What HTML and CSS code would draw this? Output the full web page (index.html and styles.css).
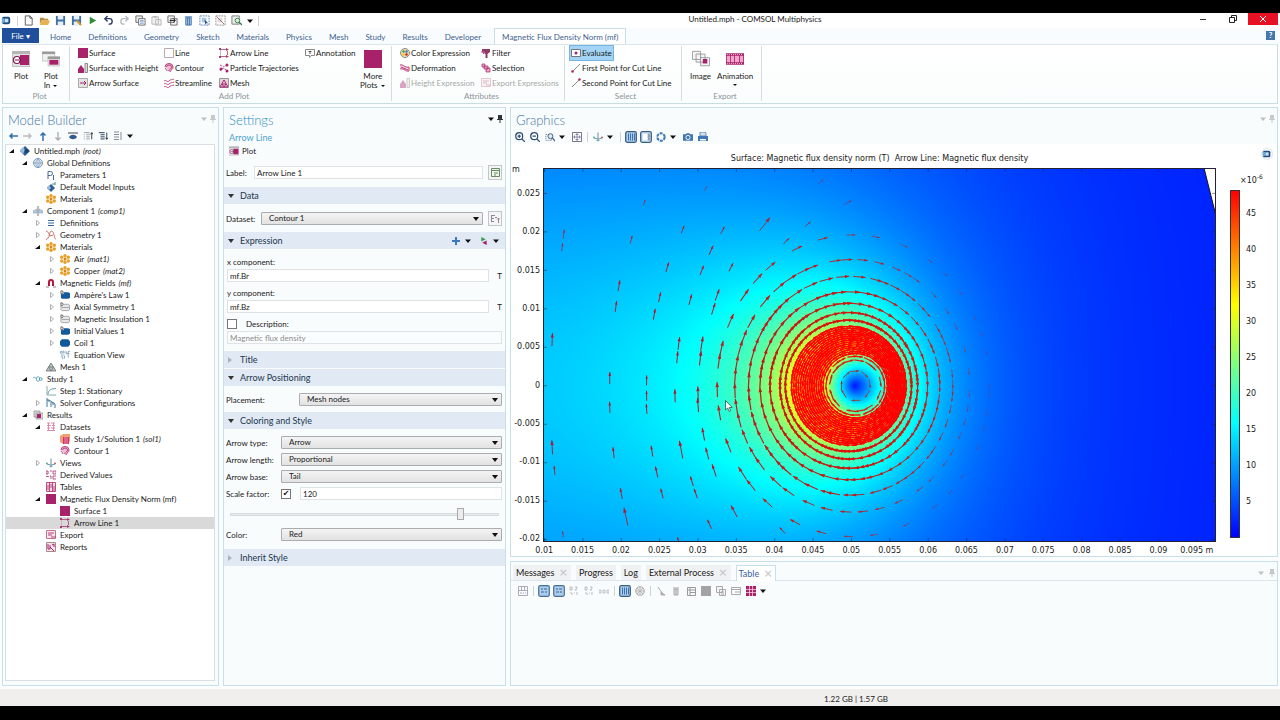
FILE: index.html
```html
<!DOCTYPE html>
<html lang="en">
<head>
    <meta charset="UTF-8">
    <meta name="viewport" content="width=device-width, initial-scale=1.0">
    <title>Untitled.mph - COMSOL Multiphysics</title>
    <link rel="stylesheet" href="styles.css">
</head>
<body>
    <svg class="sprite" aria-hidden="true">
        <!-- general -->
        <symbol id="app" viewBox="0 0 12 12"><rect x="1" y="2" width="9" height="8" rx="2" fill="#1d4a7e"/><rect x="4" y="4" width="4" height="4" fill="#c8e4f4"/><path d="M1 3l3 1v4l-3 1z" fill="#6ea6d4"/></symbol>
        <symbol id="new" viewBox="0 0 12 12"><path d="M2.5 1h5l2.5 2.5v7.5h-7.5zM7.5 1v2.5h2.5" fill="#fff" stroke="#555"/></symbol>
        <symbol id="open" viewBox="0 0 12 12"><path d="M1 3h4l1 1h4v2H3l-2 4z" fill="#b98a3c"/><path d="M3 6h9l-2 5H1z" fill="#e8b14f"/></symbol>
        <symbol id="save" viewBox="0 0 12 12"><path d="M1 1h10v10H1z" fill="#3f6fa5"/><path d="M3 1h6v4H3zM3 7h6v4H3z" fill="#e6eef6"/></symbol>
        <symbol id="saveas" viewBox="0 0 12 12"><path d="M1 1h10v10H1z" fill="#3f6fa5"/><path d="M3 1h6v4H3zM3 7h6v4H3z" fill="#e6eef6"/><path d="M6 6l5 5" stroke="#d79a2e" stroke-width="2"/></symbol>
        <symbol id="run" viewBox="0 0 12 12"><path d="M3 2l7 4-7 4z" fill="#2e8b3a"/></symbol>
        <symbol id="undo" viewBox="0 0 12 12"><path d="M5 1L2 4l3 3M2 4h5a3 3 0 0 1 0 6H6" fill="none" stroke="#2b3f66" stroke-width="1.5"/></symbol>
        <symbol id="redo" viewBox="0 0 12 12"><path d="M7 1l3 3-3 3M10 4H5a3 3 0 0 0 0 6h1" fill="none" stroke="#b5bac0" stroke-width="1.5"/></symbol>
        <symbol id="copy" viewBox="0 0 12 12"><path d="M1 1h7v7H1z" fill="#eee" stroke="#666"/><path d="M4 4h7v7H4z" fill="#fff" stroke="#666"/><path d="M5.5 6h4M5.5 7.5h4M5.5 9h4" stroke="#4878ac" stroke-width=".7"/></symbol>
        <symbol id="paste" viewBox="0 0 12 12"><path d="M1 2h7v8H1zM5 5h6v6H5z" fill="#f2f2f2" stroke="#b4b4b4"/><path d="M3 1h3v2H3z" fill="#b4b4b4"/></symbol>
        <symbol id="dup" viewBox="0 0 12 12"><path d="M1 1h7v7H1zM4 4h7v7H4z" fill="#f4f4f4" stroke="#666"/><path d="M3 6h6M7 4l2 2-2 2" fill="none" stroke="#222"/></symbol>
        <symbol id="trash" viewBox="0 0 12 12"><path d="M2 2h8M3 3h6v8H3zM5 3v8M7 3v8" fill="#a9c6e6" stroke="#4373aa"/></symbol>
        <symbol id="sel" viewBox="0 0 12 12"><path d="M1 1h10v10H1z" fill="none" stroke="#4d7fb3" stroke-dasharray="2 1"/><path d="M3 3h5v5H3z" fill="#a7c5e4"/><path d="M6 5l4 4H8l-1 2z" fill="#23508c"/></symbol>
        <symbol id="desel" viewBox="0 0 12 12"><path d="M1 1h10v10H1z" fill="none" stroke="#888" stroke-dasharray="2 1"/><path d="M3 3h5v5H3z" fill="#d8d8d8"/><path d="M2 2l8 8" stroke="#a66"/></symbol>
        <symbol id="find" viewBox="0 0 12 12"><path d="M1 1h8v9H1z" fill="#eee" stroke="#777"/><circle cx="7" cy="6" r="2.5" fill="#d8f0d8" stroke="#3d7d4a"/><path d="M9 8l3 3" stroke="#3d7d4a" stroke-width="1.5"/></symbol>
        <symbol id="caret" viewBox="0 0 6 6"><path d="M0 1.5h6L3 5z" fill="#111"/></symbol>
        <symbol id="pin" viewBox="0 0 6 8"><path d="M1 0h4v4h1v1H3.5v3h-1V5H0V4h1z" fill="currentColor"/></symbol>
        <!-- ribbon -->
        <symbol id="plot" viewBox="0 0 18 16"><rect x=".5" y=".5" width="17" height="15" fill="#e3e3e3" stroke="#c0c0c0"/><path d="M0 0h18v3H0z" fill="#b5b5b5"/><path d="M8 4h9v10H8z" fill="#a8216b"/><circle cx="5" cy="9" r="3.5" fill="#fff" stroke="#7e1650" stroke-width="1.2"/><path d="M3 9h6M7 7l2 2-2 2" fill="none" stroke="#7e1650"/></symbol>
        <symbol id="plotin" viewBox="0 0 22 18"><path d="M.5.5h15v11H.5z" fill="#f0f0f0" stroke="#bbb"/><path d="M0 0h16v3H0z" fill="#999"/><path d="M7.5 6.5h14v11h-14z" fill="#f0f0f0" stroke="#bbb"/><path d="M7 6h15v3H7z" fill="#999"/><path d="M9 10h11v6H9z" fill="#a8216b"/></symbol>
        <symbol id="surface" viewBox="0 0 10 10"><rect width="10" height="10" fill="#a8216b"/></symbol>
        <symbol id="height" viewBox="0 0 10 10"><path d="M0 10V6l3-4 3 4v4z" fill="#a8216b"/><path d="M7 .5h2.5v9H7z" fill="#ddd" stroke="#888"/></symbol>
        <symbol id="arrsurf" viewBox="0 0 10 10"><path d="M.5.5h9v9h-9z" fill="#e4e4e4" stroke="#aaa"/><path d="M2 5h5M6 3l2 2-2 2" fill="none" stroke="#a8216b"/></symbol>
        <symbol id="line" viewBox="0 0 10 10"><path d="M.5.5h9v9h-9z" fill="#fff" stroke="#b9a9b2"/></symbol>
        <symbol id="contour" viewBox="0 0 10 10"><path d="M1 4a4 3.5 0 0 1 8 0c0 3-2 2-3 5M2.5 4a2.5 2 0 0 1 5 0c0 2-2 2-3 4M1 5c1 2 2 1 2 3" fill="#f0bcd3" stroke="#b8417d"/></symbol>
        <symbol id="stream" viewBox="0 0 10 10"><path d="M0 3c2-2 3 2 5 0s3-1 5-2M0 6c2-2 3 2 5 0s3-1 5-2M0 9c2-2 3 2 5 0s3-1 5-2" fill="none" stroke="#c34a86"/></symbol>
        <symbol id="arrline" viewBox="0 0 10 10"><path d="M1.5 1v8" stroke="#c9b4bf"/><path d="M1 1.5h7M1 8.5h7M8.5 3v4" stroke="#9a4470" fill="none" stroke-width=".8"/><path d="M7 0l3 1.5-3 1.5zM7 7l3 1.5-3 1.5zM0 0h2v2H0zM0 8h2v2H0z" fill="#b03a74"/></symbol>
        <symbol id="particle" viewBox="0 0 10 10"><path d="M1 2l4 2 4-3M1 8l3-3 5 3" fill="none" stroke="#c34a86" stroke-dasharray="2 1"/><circle cx="2" cy="6" r="1.5" fill="#a8216b"/><circle cx="8" cy="2" r="1.5" fill="#a8216b"/><circle cx="8" cy="8" r="1.5" fill="#a8216b"/></symbol>
        <symbol id="meshplot" viewBox="0 0 10 10"><path d="M.5.5h9v9h-9z" fill="#e4d4dc" stroke="#999"/><path d="M1 9l4-7 4 7zM3 6h4L5 9z" fill="none" stroke="#a8216b"/></symbol>
        <symbol id="annot" viewBox="0 0 10 10"><path d="M.5 1.5h9v6H6L4.5 9.5V7.5h-4z" fill="#fff" stroke="#888"/><path d="M3.5 3.5h3M5 3.5V6" stroke="#555"/></symbol>
        <symbol id="colorex" viewBox="0 0 10 10"><circle cx="5" cy="5" r="4.5" fill="#efe2a6" stroke="#8a8a8a"/><circle cx="3.5" cy="3.5" r="1.3" fill="#47a05c"/><circle cx="6.5" cy="3.5" r="1.3" fill="#4878c0"/><circle cx="3.5" cy="6.5" r="1.3" fill="#e5c637"/><circle cx="6.5" cy="6.5" r="1.3" fill="#c23"/></symbol>
        <symbol id="deform" viewBox="0 0 10 10"><path d="M0 2c4-1 4 3 9 2v4c-4 1-4-3-9-2" fill="#f3cfdf" stroke="#b8417d"/><path d="M1 4l7 3" stroke="#b8417d"/></symbol>
        <symbol id="filter" viewBox="0 0 10 10"><path d="M1 1h8v3L6.5 6v4h-2V6L1 4z" fill="#8d3b66"/><path d="M0 4h4M2 3l2 1-2 2" stroke="#c34a86" fill="none"/></symbol>
        <symbol id="select" viewBox="0 0 10 10"><path d="M1 1h3v3H1zM3 3h4v3H3zM5 5h4v4H5z" fill="#e9a8c6" stroke="#a8216b" stroke-width=".7"/></symbol>
        <symbol id="export" viewBox="0 0 10 10"><path d="M.5.5h9v8h-9z" fill="#f4e8ee" stroke="#b78"/><path d="M2 3h6M2 5h4M5 7h5" stroke="#b8417d"/></symbol>
        <symbol id="eval" viewBox="0 0 10 10"><path d="M.5 1.5h9v7h-9z" fill="#fff" stroke="#777"/><circle cx="5" cy="5" r="1.5" fill="#a8216b"/></symbol>
        <symbol id="cut1" viewBox="0 0 10 10"><path d="M1 9l8-8" stroke="#888"/><circle cx="1.5" cy="8.5" r="1.2" fill="#b0204f"/></symbol>
        <symbol id="cut2" viewBox="0 0 10 10"><path d="M1 9l8-8" stroke="#888"/><circle cx="8.5" cy="1.5" r="1.2" fill="#b0204f"/></symbol>
        <symbol id="image" viewBox="0 0 20 18"><path d="M.5.5h9v9h-9zM4.5 3.5h10v9h-10zM9.5 7.5h10v9h-10z" fill="#f4f4f4" stroke="#999"/><path d="M12 9h5v5h-5z" fill="#a8216b"/></symbol>
        <symbol id="film" viewBox="0 0 22 14"><path d="M0 0h22v14H0z" fill="#a8216b"/><path d="M1 3h4v8H1zM6 3h4v8H6zM11 3h5v8h-5zM17 3h4v8h-4z" fill="#f0a6cb"/><path d="M1 1.5h20M1 12.5h20" stroke="#fff" stroke-dasharray="1 1.5"/></symbol>
        <!-- model tree -->
        <symbol id="tri-open" viewBox="0 0 6 6"><path d="M5 1v4H0z" fill="#111"/></symbol>
        <symbol id="tri-closed" viewBox="0 0 6 6"><path d="M1.5.5L4.5 3l-3 2.5z" fill="#fff" stroke="#999" stroke-width=".8"/></symbol>
        <symbol id="root" viewBox="0 0 10 10"><path d="M5 0l5 5-5 5-5-5z" fill="#2f5f94"/><path d="M0 4l3-3 2 3-2 4z" fill="#9bbcdc"/><circle cx="6.5" cy="5" r="2" fill="#1c3f6d"/></symbol>
        <symbol id="globe" viewBox="0 0 10 10"><circle cx="5" cy="5" r="4.5" fill="#e3eef8" stroke="#7898b8"/><path d="M5 0v10M0 5h10M5 .5c-3 3-3 6 0 9M5 .5c3 3 3 6 0 9" fill="none" stroke="#7898b8" stroke-width=".7"/></symbol>
        <symbol id="pi" viewBox="0 0 10 10"><path d="M2 9V1.5h2.5a2 2 0 0 1 0 4H2M7.5 5v5" fill="none" stroke="#44689a"/></symbol>
        <symbol id="inputs" viewBox="0 0 10 10"><path d="M5 2l4 4-4 4-4-4z" fill="#2f5f94"/><path d="M1 5l2-2 2 3-2 2z" fill="#9bbcdc"/><path d="M6 2h3M9 0v3" stroke="#3b9a8c"/></symbol>
        <symbol id="mat" viewBox="0 0 10 10"><g fill="#e8a127"><circle cx="5" cy="1.7" r="1.7"/><circle cx="5" cy="8.3" r="1.7"/><circle cx="1.7" cy="3.2" r="1.7"/><circle cx="8.3" cy="3.2" r="1.7"/><circle cx="1.7" cy="7" r="1.7"/><circle cx="8.3" cy="7" r="1.7"/></g><circle cx="5" cy="5" r="1.5" fill="#d0871a"/></symbol>
        <symbol id="comp" viewBox="0 0 10 10"><path d="M5 0v10" stroke="#777"/><path d="M0 5l4-2v4H0zM6 3l4 2v2H6z" fill="#b8cbdc" stroke="#8aa3ba" stroke-width=".6"/></symbol>
        <symbol id="defs" viewBox="0 0 10 10"><path d="M2 2.5h6M2 5h6M2 7.5h6" stroke="#3566a4"/></symbol>
        <symbol id="geom" viewBox="0 0 10 10"><path d="M0 1c2 0 3 3 4 5M0 9.5C4 9 3 1 5.5 1S8 8 10 9.5M4 6l3-1" fill="none" stroke="#c4645c" stroke-width=".9"/></symbol>
        <symbol id="magnet" viewBox="0 0 10 10"><path d="M3 8V4a2 2 0 0 1 4 0v4" fill="none" stroke="#b5163c" stroke-width="2"/><path d="M0 9h3M7 9h3" stroke="#888"/></symbol>
        <symbol id="dom" viewBox="0 0 11 10"><path d="M1 4l3-2h5l2 1v5L9 9H2L1 8z" fill="#125a9a"/><path d="M0 0h4v4H0z" fill="#fff"/><path d="M1 .5h1a1.3 1.3 0 0 1 0 3H1z" fill="none" stroke="#333" stroke-width=".8"/></symbol>
        <symbol id="bnd" viewBox="0 0 11 10"><path d="M1 4l3-2h5l1.5 1v5L9 9H2L1 8zM2 5.5h8" fill="#e8e8e8" stroke="#8a8f96" stroke-width=".8"/><path d="M0 0h4v4H0z" fill="#fff"/><path d="M1 .5h1a1.3 1.3 0 0 1 0 3H1z" fill="none" stroke="#333" stroke-width=".8"/></symbol>
        <symbol id="coil" viewBox="0 0 11 10"><path d="M0 3l2-2h7l2 2v4L9 9H2L0 7z" fill="#125a9a"/></symbol>
        <symbol id="eqn" viewBox="0 0 11 10"><path d="M.5 1h2v2h-2zM4 0v3M5.5 1v2M1 5h4M1 7h2v2.5M5 6v3M9 8V1h2M7.5 3.5h3M7 1v3" fill="none" stroke="#6b8fae" stroke-width=".8"/></symbol>
        <symbol id="mesh" viewBox="0 0 10 10"><path d="M5 1l5 8H0zM2.5 5h5L5 9z" fill="#bcc4c4" stroke="#687070" stroke-width=".8"/></symbol>
        <symbol id="study" viewBox="0 0 11 10"><path d="M0 4c2-2 3 0 4 1M4 5a1.7 1.7 0 1 0 3 0 1.7 1.7 0 1 0-3 0M7 5a1.5 1.5 0 1 0 3 0 1.5 1.5 0 1 0-3 0" fill="none" stroke="#4c9ab4"/></symbol>
        <symbol id="step" viewBox="0 0 10 10"><path d="M1 0v9h9" fill="none" stroke="#8aa"/><path d="M2 8c1-5 3-5 8-5.5" fill="none" stroke="#5b9dac"/></symbol>
        <symbol id="solver" viewBox="0 0 10 10"><path d="M1 0v9M3 2v2M5 4v5M7 4v3M9 6v4M1 2h2l6 4" fill="none" stroke="#41739a"/></symbol>
        <symbol id="results" viewBox="0 0 10 10"><path d="M1 1h6v6H1zM3 3h7v6H3z" fill="#ddd" stroke="#888" stroke-width=".7"/><path d="M4 4h4v4H4z" fill="#a8216b"/></symbol>
        <symbol id="data" viewBox="0 0 10 10"><path d="M1 1h3M5 1h4M1 3.5h4M6 3.5h3M1 6h3M5 6h4M1 8.5h8M2.5 1v8M7.5 1v8" stroke="#d98cae"/></symbol>
        <symbol id="cube" viewBox="0 0 10 10"><path d="M0 2l3-2h7v7l-2 3H3L0 8z" fill="#f0a070"/><path d="M3 3h6v7H3z" fill="#d2326c"/><path d="M5 3v7M7 3v7" stroke="#f3bfd0" stroke-width=".7"/></symbol>
        <symbol id="views" viewBox="0 0 11 10"><path d="M5.5 0v7.5L1 6M5.5 7.5L10 6M4 9h3" fill="none" stroke="#58859a"/><circle cx="10" cy="5.5" r="1" fill="#b55"/><circle cx="1" cy="5.5" r="1" fill="#4a9"/></symbol>
        <symbol id="derived" viewBox="0 0 10 10"><path d="M0 1h2v3H0zM4 1h2M7 1h3v3H7zM0 6.5h3M4 6h1v3M7 6v3h3M7 6h3" fill="none" stroke="#b8417d" stroke-width=".9"/></symbol>
        <symbol id="tables" viewBox="0 0 10 10"><path d="M.5.5h9v9h-9zM3.5 0v10M6.5 0v10M2 3v5M5 2v4M8 4v5" fill="#f6dbe7" stroke="#b03a74" stroke-width=".9"/></symbol>
        <symbol id="report" viewBox="0 0 10 10"><path d="M.5.5h9v9h-9z" fill="#f2e6ec" stroke="#a88"/><path d="M2 2v5h2V3M4 5l4 4M6 3l2-1v3" fill="none" stroke="#a8216b"/></symbol>
        <!-- panel toolbars -->
        <symbol id="left" viewBox="0 0 10 10"><path d="M10 5H2M4.5 2.5L2 5l2.5 2.5" fill="none" stroke="#2f6fb0" stroke-width="1.5"/></symbol>
        <symbol id="right" viewBox="0 0 10 10"><path d="M0 5h8M5.5 2.5L8 5 5.5 7.5" fill="none" stroke="#bbb" stroke-width="1.3"/></symbol>
        <symbol id="up" viewBox="0 0 10 10"><path d="M5 10V2M2.5 4.5L5 2l2.5 2.5" fill="none" stroke="#2f6fb0" stroke-width="1.5"/></symbol>
        <symbol id="down" viewBox="0 0 10 10"><path d="M5 1v8M2.5 6.5L5 9l2.5-2.5" fill="none" stroke="#aaa" stroke-width="1.3"/></symbol>
        <symbol id="show" viewBox="0 0 10 10"><path d="M0 2h10" stroke="#445"/><path d="M1 6c2-3 6-3 8 0-2 3-6 3-8 0z" fill="#31598a"/></symbol>
        <symbol id="expand" viewBox="0 0 12 10"><path d="M1 1h7M1 3.5h1M1 6h1M1 8.5h1M4 3.5h4M4 6h4M4 8.5h4" stroke="#889"/><path d="M10.5 9V1M9 3l1.5-2L12 3" fill="none" stroke="#222"/></symbol>
        <symbol id="collapse" viewBox="0 0 12 10"><path d="M1 1h7M3 3.5h5M3 6h5M3 8.5h5" stroke="#346" stroke-width="1.2"/><path d="M10.5 1v8M9 7l1.5 2L12 7" fill="none" stroke="#222"/></symbol>
        <symbol id="columns" viewBox="0 0 10 10"><path d="M1 1h5M1 3.5h5M1 6h5M1 8.5h5M8 1v8" stroke="#889"/></symbol>
        <symbol id="rename" viewBox="0 0 10 10"><path d="M1.5.5h8v8h-8z" fill="#eef4ea" stroke="#6a8a6a"/><path d="M1.5 2.5h8M4 5h4M4 7h2" stroke="#5a925a"/></symbol>
        <symbol id="goto" viewBox="0 0 10 10"><path d="M1.5 1v7M1 1.5h4M1 4.5h3M2 7.5h2M8.5 9V4M7 5.5L8.5 4 10 5.5M5 3.5h2" fill="none" stroke="#889"/></symbol>
        <symbol id="plus" viewBox="0 0 8 8"><path d="M4 0v8M0 4h8" stroke="#3d77b5" stroke-width="2"/></symbol>
        <symbol id="replace" viewBox="0 0 8 9"><path d="M1 0l5 2.5L1 5z" fill="#3d9a4f"/><path d="M7 4v5L2 6.5z" fill="#a8216b"/></symbol>
        <symbol id="zin" viewBox="0 0 10 10"><circle cx="4.2" cy="4.2" r="3.5" fill="#fff" stroke="#2c4c74" stroke-width="1.2"/><path d="M7 7l3 3M2.5 4.2h3.4M4.2 2.5v3.4" stroke="#2c4c74" stroke-width="1.2"/></symbol>
        <symbol id="zout" viewBox="0 0 10 10"><circle cx="4.2" cy="4.2" r="3.5" fill="#fff" stroke="#2c4c74" stroke-width="1.2"/><path d="M7 7l3 3M2.5 4.2h3.4" stroke="#2c4c74" stroke-width="1.2"/></symbol>
        <symbol id="zbox" viewBox="0 0 12 10"><path d="M1 2h7v7H1z" fill="none" stroke="#678" stroke-dasharray="1.5 1"/><circle cx="6.5" cy="4" r="3" fill="#dfe9f3" stroke="#2c4c74"/><path d="M9 6l3 4" stroke="#2c4c74" stroke-width="1.3"/></symbol>
        <symbol id="extents" viewBox="0 0 10 10"><path d="M.5.5h9v9h-9z" fill="#fff" stroke="#778"/><path d="M5 1v8M1 5h8M3.5 2.5h3M3.5 7.5h3M2.5 3.5v3M7.5 3.5v3" stroke="#779" stroke-width=".8"/></symbol>
        <symbol id="grid" viewBox="0 0 12 12"><rect x=".7" y=".7" width="10.6" height="10.6" rx="1.5" fill="#a9cdee" stroke="#3c5f85" stroke-width="1.3"/><path d="M3.5 2.5v7M5.5 2.5v7M7.5 2.5v7M9.5 2.5v7" stroke="#3f72ab"/></symbol>
        <symbol id="legend" viewBox="0 0 12 12"><rect x=".7" y=".7" width="10.6" height="10.6" rx="1.5" fill="#cfe2f3" stroke="#3c5f85" stroke-width="1.3"/><path d="M3 3h4v6H3z" fill="#fff"/><path d="M9 2.5v7" stroke="#678" stroke-width="1.2"/></symbol>
        <symbol id="scene" viewBox="0 0 10 10"><circle cx="5" cy="5" r="3.7" fill="none" stroke="#3b78b4" stroke-width="2" stroke-dasharray="3 .9"/></symbol>
        <symbol id="camera" viewBox="0 0 11 10"><path d="M0 2h3l1-1h3l1 1h3v7H0z" fill="#3f78b4"/><circle cx="5.5" cy="5.5" r="2.3" fill="#3f78b4" stroke="#fff"/></symbol>
        <symbol id="print" viewBox="0 0 10 10"><path d="M2 0h5l1 1v3H2z" fill="#cfe0f0" stroke="#4a78a8" stroke-width=".8"/><path d="M0 4h10v5H0z" fill="#3f78b4"/><path d="M2 7h6v1.5H2z" fill="#fff"/></symbol>
        <!-- table toolbar -->
        <symbol id="tgrid" viewBox="0 0 10 10"><path d="M.5.5h9v9h-9zM0 4.5h10M3.5 0v4M6.5 0v4M2 7h2M5 7h1M7 7h1" fill="none" stroke="#aab"/></symbol>
        <symbol id="digits" viewBox="0 0 12 12"><rect x=".7" y=".7" width="10.6" height="10.6" rx="1.5" fill="#a9cdee" stroke="#4a6d93" stroke-width="1.2"/><path d="M3 4h2M6 4h3M3 7h3M7 7h2" stroke="#468"/></symbol>
        <symbol id="num" viewBox="0 0 10 10"><path d="M1 1h2v3H1zM6 1h2v1.5L6 4h2M1 7h2v2M5 7h1M8 6v3" fill="none" stroke="#b4b8bc" stroke-width=".9"/></symbol>
        <symbol id="small" viewBox="0 0 10 10"><path d="M0 4h2v3H0zM4 4h2v3H4zM8 4h2v3H8z" fill="none" stroke="#b4b8bc" stroke-width=".8"/></symbol>
        <symbol id="wheel" viewBox="0 0 10 10"><circle cx="5" cy="5" r="4.3" fill="#ececec" stroke="#aaa"/><path d="M5 1v8M1 5h8M2 2l6 6M8 2L2 8" stroke="#aaa" stroke-width=".7"/></symbol>
        <symbol id="broom" viewBox="0 0 10 10"><path d="M2 1l4 6M5 6l4 3H5z" fill="#bbb" stroke="#aaa"/></symbol>
        <symbol id="bin" viewBox="0 0 10 10"><path d="M2 2h6M3 3h4v6H3zM5 3v6" fill="#ddd" stroke="#aaa"/></symbol>
        <symbol id="rows" viewBox="0 0 10 10"><path d="M1.5 1.5h8v8h-8zM1 4h9M4 1v9M4 6.5h5" fill="none" stroke="#999"/></symbol>
        <symbol id="gray" viewBox="0 0 10 10"><rect width="10" height="10" fill="#a3a3a3"/></symbol>
        <symbol id="tcopy" viewBox="0 0 10 10"><path d="M.5.5h6v6h-6zM3.5 3.5h6v6h-6zM5 6h3M5 8h3" fill="#f4f4f4" stroke="#aaa"/></symbol>
        <symbol id="texp" viewBox="0 0 10 10"><path d="M.5 1.5h9v7h-9zM.5 3.5h9M4 6h5" fill="none" stroke="#aaa"/></symbol>
        <symbol id="tmag" viewBox="0 0 10 10"><path d="M0 0h10v10H0z" fill="#a8216b"/><path d="M3.5 0v10M6.5 0v10M0 3.5h10M0 6.500h10" stroke="#f4cfe0" stroke-width=".8"/></symbol>
    </svg>

    <header class="titlebar">
        <div class="quick">
            <svg><use href="#app"/></svg><i class="sep"></i>
            <button aria-label="New"><svg><use href="#new"/></svg></button>
            <button aria-label="Open"><svg><use href="#open"/></svg></button>
            <button aria-label="Save"><svg><use href="#save"/></svg></button>
            <button aria-label="Save as"><svg><use href="#saveas"/></svg></button>
            <button aria-label="Run"><svg><use href="#run"/></svg></button>
            <button aria-label="Undo"><svg><use href="#undo"/></svg></button>
            <button aria-label="Redo"><svg><use href="#redo"/></svg></button>
            <button aria-label="Copy"><svg><use href="#copy"/></svg></button>
            <button aria-label="Paste"><svg><use href="#paste"/></svg></button>
            <button aria-label="Duplicate"><svg><use href="#dup"/></svg></button>
            <button aria-label="Delete"><svg><use href="#trash"/></svg></button>
            <button aria-label="Select"><svg><use href="#sel"/></svg></button>
            <button aria-label="Clear selection"><svg><use href="#desel"/></svg></button>
            <button aria-label="Find"><svg><use href="#find"/></svg></button>
            <svg class="caret"><use href="#caret"/></svg><i class="sep"></i>
        </div>
        <div class="title">Untitled.mph - COMSOL Multiphysics</div>
        <div class="window-buttons">
            <button aria-label="Minimize"><svg viewBox="0 0 8 8"><path d="M1 4.5h6" stroke="#333"/></svg></button>
            <button aria-label="Restore"><svg viewBox="0 0 8 8"><path d="M.5 2.5h5v5h-5zM2.5 2V.5h5v5H6" fill="none" stroke="#222"/></svg></button>
            <button class="close" aria-label="Close"><svg viewBox="0 0 8 8"><path d="M1 1l6 6M7 1L1 7" stroke="#fff"/></svg></button>
        </div>
    </header>

    <nav class="tabs">
        <button class="file">File ▾</button>
        <a href="#home">Home</a>
        <a href="#definitions">Definitions</a>
        <a href="#geometry">Geometry</a>
        <a href="#sketch">Sketch</a>
        <a href="#materials">Materials</a>
        <a href="#physics">Physics</a>
        <a href="#mesh-tab">Mesh</a>
        <a href="#study-tab">Study</a>
        <a href="#results-tab">Results</a>
        <a href="#developer">Developer</a>
        <a href="#norm" class="active">Magnetic Flux Density Norm (mf)</a>
        <button class="help" aria-label="Help">?</button>
    </nav>

    <section class="ribbon">
        <div class="group group-plot">
            <div class="tools">
                <button class="big"><svg><use href="#plot"/></svg>Plot</button>
                <button class="big"><svg><use href="#plotin"/></svg><span>Plot<br>In <b class="drop"></b></span></button>
            </div>
            <div class="group-name">Plot</div>
        </div>
        <div class="group group-add">
            <div class="tools">
                <div class="col col-1">
                    <button><svg><use href="#surface"/></svg>Surface</button>
                    <button><svg><use href="#height"/></svg>Surface with Height</button>
                    <button><svg><use href="#arrsurf"/></svg>Arrow Surface</button>
                </div>
                <div class="col col-2">
                    <button><svg><use href="#line"/></svg>Line</button>
                    <button><svg><use href="#contour"/></svg>Contour</button>
                    <button><svg><use href="#stream"/></svg>Streamline</button>
                </div>
                <div class="col col-1">
                    <button><svg><use href="#arrline"/></svg>Arrow Line</button>
                    <button><svg><use href="#particle"/></svg>Particle Trajectories</button>
                    <button><svg><use href="#meshplot"/></svg>Mesh</button>
                </div>
                <div class="col col-2">
                    <button><svg><use href="#annot"/></svg>Annotation</button>
                </div>
                <button class="big"><svg><use href="#surface"/></svg><span>More<br>Plots <b class="drop"></b></span></button>
            </div>
            <div class="group-name">Add Plot</div>
        </div>
        <div class="group group-attr">
            <div class="tools">
                <div class="col col-3">
                    <button><svg><use href="#colorex"/></svg>Color Expression</button>
                    <button><svg><use href="#deform"/></svg>Deformation</button>
                    <button disabled><svg><use href="#height"/></svg>Height Expression</button>
                </div>
                <div class="col col-3">
                    <button><svg><use href="#filter"/></svg>Filter</button>
                    <button><svg><use href="#select"/></svg>Selection</button>
                    <button disabled><svg><use href="#export"/></svg>Export Expressions</button>
                </div>
            </div>
            <div class="group-name">Attributes</div>
        </div>
        <div class="group group-select">
            <div class="tools">
                <div class="col">
                    <button class="on"><svg><use href="#eval"/></svg>Evaluate</button>
                    <button><svg><use href="#cut1"/></svg>First Point for Cut Line</button>
                    <button><svg><use href="#cut2"/></svg>Second Point for Cut Line</button>
                </div>
            </div>
            <div class="group-name">Select</div>
        </div>
        <div class="group group-export">
            <div class="tools">
                <button class="big"><svg><use href="#image"/></svg>Image</button>
                <button class="big"><svg><use href="#film"/></svg>Animation<b class="drop"></b></button>
            </div>
            <div class="group-name">Export</div>
        </div>
    </section>

    <main class="workspace">
        <section class="panel model">
            <div class="panel-head">
                <h2>Model Builder</h2>
                <svg class="caret faint"><use href="#caret"/></svg><svg class="pin faint"><use href="#pin"/></svg>
            </div>
            <div class="toolbar">
                <button aria-label="Back"><svg><use href="#left"/></svg></button>
                <button aria-label="Forward"><svg><use href="#right"/></svg></button>
                <button aria-label="Up"><svg><use href="#up"/></svg></button>
                <button aria-label="Down"><svg><use href="#down"/></svg></button>
                <button aria-label="Show"><svg><use href="#show"/></svg></button>
                <button aria-label="Expand"><svg><use href="#expand"/></svg></button>
                <button aria-label="Collapse"><svg><use href="#collapse"/></svg></button>
                <button aria-label="Columns"><svg><use href="#columns"/></svg></button>
                <svg class="caret"><use href="#caret"/></svg>
            </div>
            <ul class="tree">
                <li><svg class="tri"><use href="#tri-open"/></svg><svg><use href="#root"/></svg>Untitled.mph <em>(root)</em></li>
                <li class="lv1"><svg class="tri"><use href="#tri-open"/></svg><svg><use href="#globe"/></svg>Global Definitions</li>
                <li class="lv2"><svg class="tri"></svg><svg><use href="#pi"/></svg>Parameters 1</li>
                <li class="lv2"><svg class="tri"></svg><svg><use href="#inputs"/></svg>Default Model Inputs</li>
                <li class="lv2"><svg class="tri"></svg><svg><use href="#mat"/></svg>Materials</li>
                <li class="lv1"><svg class="tri"><use href="#tri-open"/></svg><svg><use href="#comp"/></svg>Component 1 <em>(comp1)</em></li>
                <li class="lv2"><svg class="tri"><use href="#tri-closed"/></svg><svg><use href="#defs"/></svg>Definitions</li>
                <li class="lv2"><svg class="tri"><use href="#tri-closed"/></svg><svg><use href="#geom"/></svg>Geometry 1</li>
                <li class="lv2"><svg class="tri"><use href="#tri-open"/></svg><svg><use href="#mat"/></svg>Materials</li>
                <li class="lv3"><svg class="tri"><use href="#tri-closed"/></svg><svg><use href="#mat"/></svg>Air <em>(mat1)</em></li>
                <li class="lv3"><svg class="tri"><use href="#tri-closed"/></svg><svg><use href="#mat"/></svg>Copper <em>(mat2)</em></li>
                <li class="lv2"><svg class="tri"><use href="#tri-open"/></svg><svg><use href="#magnet"/></svg>Magnetic Fields <em>(mf)</em></li>
                <li class="lv3"><svg class="tri"><use href="#tri-closed"/></svg><svg><use href="#dom"/></svg>Ampère's Law 1</li>
                <li class="lv3"><svg class="tri"><use href="#tri-closed"/></svg><svg><use href="#bnd"/></svg>Axial Symmetry 1</li>
                <li class="lv3"><svg class="tri"><use href="#tri-closed"/></svg><svg><use href="#bnd"/></svg>Magnetic Insulation 1</li>
                <li class="lv3"><svg class="tri"><use href="#tri-closed"/></svg><svg><use href="#dom"/></svg>Initial Values 1</li>
                <li class="lv3"><svg class="tri"><use href="#tri-closed"/></svg><svg><use href="#coil"/></svg>Coil 1</li>
                <li class="lv3"><svg class="tri"></svg><svg><use href="#eqn"/></svg>Equation View</li>
                <li class="lv2"><svg class="tri"></svg><svg><use href="#mesh"/></svg>Mesh 1</li>
                <li class="lv1"><svg class="tri"><use href="#tri-open"/></svg><svg><use href="#study"/></svg>Study 1</li>
                <li class="lv2"><svg class="tri"></svg><svg><use href="#step"/></svg>Step 1: Stationary</li>
                <li class="lv2"><svg class="tri"><use href="#tri-closed"/></svg><svg><use href="#solver"/></svg>Solver Configurations</li>
                <li class="lv1"><svg class="tri"><use href="#tri-open"/></svg><svg><use href="#results"/></svg>Results</li>
                <li class="lv2"><svg class="tri"><use href="#tri-open"/></svg><svg><use href="#data"/></svg>Datasets</li>
                <li class="lv3"><svg class="tri"></svg><svg><use href="#cube"/></svg>Study 1/Solution 1 <em>(sol1)</em></li>
                <li class="lv3"><svg class="tri"></svg><svg><use href="#contour"/></svg>Contour 1</li>
                <li class="lv2"><svg class="tri"><use href="#tri-closed"/></svg><svg><use href="#views"/></svg>Views</li>
                <li class="lv2"><svg class="tri"></svg><svg><use href="#derived"/></svg>Derived Values</li>
                <li class="lv2"><svg class="tri"></svg><svg><use href="#tables"/></svg>Tables</li>
                <li class="lv2"><svg class="tri"><use href="#tri-open"/></svg><svg><use href="#surface"/></svg>Magnetic Flux Density Norm (mf)</li>
                <li class="lv3"><svg class="tri"></svg><svg><use href="#surface"/></svg>Surface 1</li>
                <li class="lv3 selected"><svg class="tri"></svg><svg><use href="#arrline"/></svg>Arrow Line 1</li>
                <li class="lv2"><svg class="tri"></svg><svg><use href="#export"/></svg>Export</li>
                <li class="lv2"><svg class="tri"></svg><svg><use href="#report"/></svg>Reports</li>
            </ul>
        </section>

        <section class="panel settings">
            <div class="panel-head">
                <h2>Settings</h2>
                <svg class="caret"><use href="#caret"/></svg><svg class="pin"><use href="#pin"/></svg>
            </div>
            <div class="subtitle">Arrow Line</div>
            <button class="plot-button"><svg><use href="#plot"/></svg>Plot</button>
            <div class="field label-row">
                <label for="label">Label:</label>
                <input type="text" id="label" value="Arrow Line 1">
                <button class="square" aria-label="Rename"><svg><use href="#rename"/></svg></button>
            </div>

            <h3>Data</h3>
            <div class="field dataset-row">
                <label for="dataset">Dataset:</label>
                <span class="drop-down"><select id="dataset"><option>Contour 1</option></select></span>
                <button class="square" aria-label="Go to source"><svg><use href="#goto"/></svg></button>
            </div>

            <h3>Expression
                <span class="head-tools">
                    <button aria-label="Add expression"><svg><use href="#plus"/></svg></button><svg class="caret"><use href="#caret"/></svg>
                    <button aria-label="Replace expression"><svg><use href="#replace"/></svg></button><svg class="caret"><use href="#caret"/></svg>
                </span>
            </h3>
            <div class="expression">
                <label for="xcomp">x component:</label>
                <div class="unit-row"><input type="text" id="xcomp" value="mf.Br"><span>T</span></div>
                <label for="ycomp">y component:</label>
                <div class="unit-row"><input type="text" id="ycomp" value="mf.Bz"><span>T</span></div>
                <div class="check-row"><input type="checkbox" id="desc"><label for="desc">Description:</label></div>
                <input type="text" value="Magnetic flux density" aria-label="Description text" disabled>
            </div>

            <h3 class="closed">Title</h3>
            <h3>Arrow Positioning</h3>
            <div class="field placement-row">
                <label for="placement">Placement:</label>
                <span class="drop-down"><select id="placement"><option>Mesh nodes</option></select></span>
            </div>

            <h3>Coloring and Style</h3>
            <div class="style-rows">
                <div class="field">
                    <label for="type">Arrow type:</label>
                    <span class="drop-down"><select id="type"><option>Arrow</option></select></span>
                </div>
                <div class="field">
                    <label for="length">Arrow length:</label>
                    <span class="drop-down"><select id="length"><option>Proportional</option></select></span>
                </div>
                <div class="field">
                    <label for="base">Arrow base:</label>
                    <span class="drop-down"><select id="base"><option>Tail</option></select></span>
                </div>
                <div class="field">
                    <label for="scale-on">Scale factor:</label>
                    <input type="checkbox" id="scale-on" checked>
                    <input type="text" id="scale" value="120" aria-label="Scale factor value">
                </div>
                <input type="range" min="0" max="100" value="87" aria-label="Scale factor slider">
                <div class="field">
                    <label for="color">Color:</label>
                    <span class="drop-down"><select id="color"><option>Red</option></select></span>
                </div>
            </div>
            <h3 class="closed">Inherit Style</h3>
        </section>

        <div class="right">
            <section class="panel graphics">
                <div class="panel-head">
                    <h2>Graphics</h2>
                    <svg class="caret faint"><use href="#caret"/></svg><svg class="pin faint"><use href="#pin"/></svg>
                </div>
                <div class="toolbar">
                    <button aria-label="Zoom in"><svg><use href="#zin"/></svg></button>
                    <button aria-label="Zoom out"><svg><use href="#zout"/></svg></button>
                    <button aria-label="Zoom box"><svg><use href="#zbox"/></svg></button>
                    <svg class="caret"><use href="#caret"/></svg>
                    <button aria-label="Zoom extents"><svg><use href="#extents"/></svg></button>
                    <i class="sep"></i>
                    <button aria-label="Default view"><svg><use href="#views"/></svg></button>
                    <svg class="caret"><use href="#caret"/></svg>
                    <i class="sep"></i>
                    <button class="framed" aria-label="Show grid"><svg><use href="#grid"/></svg></button>
                    <button class="framed" aria-label="Show legends"><svg><use href="#legend"/></svg></button>
                    <button aria-label="Scene light"><svg><use href="#scene"/></svg></button>
                    <svg class="caret"><use href="#caret"/></svg>
                    <button aria-label="Snapshot"><svg><use href="#camera"/></svg></button>
                    <button aria-label="Print"><svg><use href="#print"/></svg></button>
                </div>
                <div class="figure">
                    <div class="plot-title">Surface: Magnetic flux density norm (T)&nbsp; Arrow Line: Magnetic flux density</div>
                    <svg class="logo"><use href="#app"/></svg>
                    <div class="y-axis">
                        <span class="unit">m</span>
                        <span>0.025</span><span>0.02</span><span>0.015</span><span>0.01</span><span>0.005</span>
                        <span>0</span><span>-0.005</span><span>-0.01</span><span>-0.015</span><span>-0.02</span>
                    </div>
                    <div class="plot-area">
                        <canvas id="field"></canvas>
                        <svg class="cursor" viewBox="0 0 8 12"><path d="M.5.5v9.5l2.2-2 1.5 3.5 1.5-.7-1.5-3.3h3z" fill="#fff" stroke="#333" stroke-width=".7"/></svg>
                    </div>
                    <div class="legend">
                        <div class="exponent">×10<sup>-6</sup></div>
                        <div class="color-bar"></div>
                        <div class="color-labels">
                            <span>45</span><span>40</span><span>35</span><span>30</span><span>25</span><span>20</span><span>15</span><span>10</span><span>5</span>
                        </div>
                    </div>
                    <div class="x-axis">
                        <span>0.01</span><span>0.015</span><span>0.02</span><span>0.025</span><span>0.03</span><span>0.035</span>
                        <span>0.04</span><span>0.045</span><span>0.05</span><span>0.055</span><span>0.06</span><span>0.065</span>
                        <span>0.07</span><span>0.075</span><span>0.08</span><span>0.085</span><span>0.09</span><span>0.095 m</span>
                    </div>
                </div>
            </section>

            <section class="panel bottom">
                <div class="bottom-tabs">
                    <button>Messages <i>×</i></button>
                    <button>Progress</button>
                    <button>Log</button>
                    <button>External Process <i>×</i></button>
                    <button class="active">Table <i>×</i></button>
                    <svg class="caret faint"><use href="#caret"/></svg><svg class="pin faint"><use href="#pin"/></svg>
                </div>
                <div class="toolbar">
                    <button aria-label="Full precision"><svg><use href="#tgrid"/></svg></button>
                    <i class="sep"></i>
                    <button class="framed" aria-label="Automatic notation"><svg><use href="#digits"/></svg></button>
                    <button class="framed" aria-label="Scientific notation"><svg><use href="#digits"/></svg></button>
                    <button aria-label="Engineering notation"><svg><use href="#num"/></svg></button>
                    <button aria-label="Decimal notation"><svg><use href="#num"/></svg></button>
                    <button aria-label="Precision"><svg><use href="#small"/></svg></button>
                    <i class="sep"></i>
                    <button class="framed" aria-label="Rectangular"><svg><use href="#grid"/></svg></button>
                    <button aria-label="Polar"><svg><use href="#wheel"/></svg></button>
                    <i class="sep"></i>
                    <button aria-label="Clear table"><svg><use href="#broom"/></svg></button>
                    <button aria-label="Delete table"><svg><use href="#bin"/></svg></button>
                    <button aria-label="Table graph"><svg><use href="#rows"/></svg></button>
                    <button aria-label="Table surface"><svg><use href="#gray"/></svg></button>
                    <button aria-label="Copy table"><svg><use href="#tcopy"/></svg></button>
                    <button aria-label="Export table"><svg><use href="#texp"/></svg></button>
                    <button aria-label="Display table"><svg><use href="#tmag"/></svg></button>
                    <svg class="caret"><use href="#caret"/></svg>
                </div>
            </section>
        </div>
    </main>

    <footer class="status">1.22 GB | 1.57 GB</footer>

    <script src="field.js"></script>
</body>
</html>
```
FILE: styles.css
```css
* {
    box-sizing: border-box;
}
body {
    margin: 0;
    height: 100vh;
    display: flex;
    flex-direction: column;
    border-top: 13px solid #000;
    border-bottom: 14px solid #000;
    background: #fbfdfe;
    color: #1a1a1a;
    font: 8px/12px Lato, "Open Sans", sans-serif;
    overflow: hidden;
}
button, input, select {
    margin: 0;
    padding: 0;
    border: 0;
    background: none;
    color: inherit;
    font: inherit;
}
svg {
    display: block;
    flex: none;
    width: 10px;
    height: 10px;
}
.sprite {
    position: absolute;
    width: 0;
    height: 0;
}
.caret {
    width: 6px;
    height: 6px;
}
.pin {
    width: 6px;
    height: 8px;
    color: #333;
}
.faint {
    opacity: 0.25;
}
.sep {
    width: 1px;
    height: 10px;
    background: #ccd3d8;
}

/* title bar */
.titlebar {
    display: grid;
    grid-template-columns: 1fr auto 1fr;
    height: 15px;
    background: #fff;
}
.quick {
    display: flex;
    align-items: center;
    gap: 5px;
    padding-left: 1px;
}
.quick svg {
    width: 11px;
    height: 11px;
}
.quick .caret {
    width: 6px;
    height: 6px;
}
.title {
    margin-left: 230px;
}
.window-buttons {
    display: flex;
    justify-content: flex-end;
    padding-right: 2px;
}
.window-buttons button {
    display: flex;
    justify-content: center;
    align-items: center;
    width: 30px;
    height: 12px;
}
.window-buttons svg {
    width: 8px;
    height: 8px;
}
.window-buttons .close {
    background: #e81123;
}

/* ribbon tabs */
.tabs {
    display: flex;
    height: 16px;
    padding: 0 5px 0 2px;
    background: #f9fcfe;
}
.tabs a {
    padding: 3px 8px 0 9px;
    color: #3f5f8f;
    text-decoration: none;
}
.tabs .file {
    width: 37px;
    height: 15px;
    margin-right: 2px;
    background: #1f4f9a;
    color: #fff;
}
.tabs .active {
    margin-left: 5px;
    padding: 2px 7px 0;
    border: 1px solid #c9dde4;
    border-bottom: 0;
    background: #fff;
}
.help {
    width: 9px;
    height: 9px;
    margin: 3px 0 0 auto;
    background: #4577ae;
    color: #fff;
    font-weight: bold;
    line-height: 9px;
}

/* ribbon */
.ribbon {
    display: flex;
    height: 60px;
    margin: 0 2px 3px;
    border: 1px solid #c9dde0;
    border-top-color: #dbe6ea;
    background: linear-gradient(#fff, #fafdfd);
}
.group {
    display: flex;
    flex-direction: column;
    justify-content: space-between;
    margin: 1px 0 2px;
    padding-left: 7px;
    border-right: 1px solid #d3dcdf;
}
.group-plot {
    width: 67px;
}
.group-add {
    width: 322px;
}
.group-attr {
    width: 173px;
}
.group-select {
    width: 117px;
    padding-left: 5px;
}
.group-export {
    width: 80px;
}
.tools {
    display: flex;
    height: 44px;
}
.tools button {
    display: flex;
    align-items: center;
    gap: 1px;
    height: 14px;
    padding: 0 1px;
    white-space: nowrap;
}
.tools button:disabled {
    opacity: 0.4;
}
.tools .on {
    align-self: flex-start;
    background: #a3d3f5;
    outline: 1px solid #78b4e0;
}
.tools .big {
    flex-direction: column;
    gap: 0;
    height: auto;
    padding: 4px 1px 0;
    line-height: 9px;
}
.big svg {
    width: 18px;
    height: 18px;
    margin-bottom: 4px;
}
.group-plot .tools {
    gap: 10px;
    padding-left: 1px;
}
.group-export .tools {
    gap: 4px;
}
.drop {
    display: inline-block;
    margin: 1px;
    border: 2px solid transparent;
    border-top-color: #111;
    border-bottom: 0;
}
.big > .drop {
    margin-top: 3px;
}
.col {
    display: flex;
    flex-direction: column;
    flex: none;
    gap: 1px;
}
.col-1 {
    width: 86px;
}
.col-2 {
    width: 55px;
}
.col-3 {
    width: 81px;
}
.group-name {
    color: #8b9499;
    text-align: center;
    line-height: 9px;
}

/* panels */
.workspace {
    flex: 1;
    display: grid;
    grid-template-columns: 217px 283px 1fr;
    gap: 4px;
    min-height: 0;
    padding: 0 2px 3px;
}
.panel {
    min-width: 0;
    border: 1px solid #c7dfea;
    background: #f9fcfd;
}
.panel-head {
    display: flex;
    align-items: center;
    gap: 3px;
    height: 21px;
    padding: 0 2px 0 5px;
}
.panel-head h2 {
    margin: 4px auto 0 0;
    color: #4676a4;
    font-size: 13px;
    font-weight: 300;
    line-height: 17px;
}
.toolbar {
    display: flex;
    align-items: center;
    gap: 5px;
    height: 13px;
    padding-left: 5px;
}

/* model builder */
.model {
    display: flex;
    flex-direction: column;
}
.tree {
    flex: 1;
    margin: 2px 3px 4px 2px;
    padding: 0;
    border: 1px solid #d9dfe2;
    background: #fff;
    list-style: none;
}
.tree li {
    display: flex;
    align-items: center;
    gap: 4px;
    height: 12px;
    padding-left: 3px;
    white-space: nowrap;
}
.tree .tri {
    width: 6px;
    height: 6px;
    margin-right: 1px;
}
.tree em {
    margin-left: -1px;
}
.tree .lv1 {
    padding-left: 16px;
}
.tree .lv2 {
    padding-left: 29px;
}
.tree .lv3 {
    padding-left: 43px;
}
.tree .selected {
    background: #d9d9d9;
}

/* settings */
.settings h2 {
    color: #2f8fc0;
}
.subtitle {
    height: 14px;
    padding: 3px 5px 0;
    color: #4aa3cf;
    font-size: 9px;
}
.plot-button {
    display: flex;
    align-items: center;
    gap: 3px;
    height: 14px;
    margin-top: 1px;
    padding-left: 5px;
}
.settings h3 {
    display: flex;
    align-items: center;
    height: 17px;
    margin: 0 0 1px;
    padding-left: 4px;
    background: #e0e9f4;
    color: #23374d;
    font-size: 9px;
    font-weight: 400;
}
.settings h3::before {
    content: "";
    width: 0;
    margin-right: 6px;
    border: 3px solid transparent;
    border-top: 4px solid #333;
    border-bottom: 0;
}
.settings h3.closed::before {
    margin-right: 8px;
    border: 3px solid transparent;
    border-left: 4px solid #aab4bd;
    border-right: 0;
}
.head-tools {
    display: flex;
    align-items: center;
    gap: 5px;
    margin-left: auto;
    padding-right: 6px;
}
.head-tools svg {
    width: 8px;
    height: 8px;
}
.head-tools .caret {
    width: 6px;
    height: 6px;
    margin-right: 4px;
}
.head-tools .caret:last-child {
    margin-right: 0;
}
.field {
    display: flex;
    align-items: center;
    height: 17px;
    padding: 0 3px 0 2px;
}
.field > label {
    flex: none;
    width: 55px;
}
.label-row {
    height: 29px;
}
.label-row > label {
    width: 28px;
}
.dataset-row {
    height: 27px;
}
.dataset-row > label {
    width: 35px;
}
.placement-row {
    height: 25px;
}
.placement-row > label {
    width: 73px;
}
input[type="text"] {
    flex: 1;
    min-width: 0;
    height: 13px;
    padding: 0 2px;
    border: 1px solid #dfe3e6;
    background: #fff;
}
input[type="text"]:disabled {
    width: 100%;
    background: #fafdfd;
    color: #8c8c8c;
}
.drop-down {
    position: relative;
    flex: 1;
}
.drop-down::after {
    content: "";
    position: absolute;
    top: 5px;
    right: 4px;
    border: 3px solid transparent;
    border-top: 4px solid #111;
    border-bottom: 0;
    pointer-events: none;
}
select {
    display: block;
    width: 100%;
    height: 13px;
    padding-left: 7px;
    border: 1px solid #a9adb0;
    border-radius: 1px;
    background: linear-gradient(#f4f4f4, #e2e2e2);
    appearance: none;
    line-height: 11px;
}
.square {
    display: flex;
    justify-content: center;
    align-items: center;
    width: 14px;
    height: 15px;
    margin-left: 5px;
    border: 1px solid #c3c6c8;
    background: #f5f5f5;
}
.expression {
    display: flex;
    flex-direction: column;
    padding: 6px 3px 7px;
}
.unit-row {
    display: flex;
    align-items: center;
    gap: 8px;
    margin: 1px 0 5px;
}
.check-row {
    display: flex;
    align-items: center;
    gap: 9px;
    height: 15px;
    margin-top: -2px;
}
.expression input:disabled {
    flex: none;
}
input[type="checkbox"] {
    flex: none;
    width: 10px;
    height: 10px;
    margin: 0;
    border: 1px solid #777;
    background: #fff;
    appearance: none;
}
input[type="checkbox"]:checked::before {
    content: "✔";
    display: block;
    font: 8px/8px "DejaVu Sans", sans-serif;
    text-align: center;
}
.field input[type="checkbox"] {
    margin-right: 9px;
}
.style-rows {
    padding: 4px 0 6px;
}
input[type="range"] {
    display: block;
    width: calc(100% - 12px);
    height: 24px;
    margin: 0 6px;
    background: none;
    appearance: none;
}
input[type="range"]::-webkit-slider-runnable-track {
    height: 3px;
    border: 1px solid #d8dbdd;
    background: #e8eaeb;
}
input[type="range"]::-webkit-slider-thumb {
    width: 7px;
    height: 12px;
    margin-top: -6px;
    border: 1px solid #a7aaac;
    background: #ececec;
    appearance: none;
}

/* graphics */
.right {
    display: flex;
    flex-direction: column;
    gap: 4px;
    min-width: 0;
}
.graphics {
    flex: 1;
    display: flex;
    flex-direction: column;
    min-height: 0;
}
.graphics .toolbar {
    height: 15px;
    padding-left: 4px;
}
.toolbar .caret {
    margin: 0 2px 0 -1px;
}
.toolbar .framed svg {
    width: 12px;
    height: 12px;
    margin: -1px;
}
.graphics .toolbar button, .bottom .toolbar button {
    width: 10px;
}
.figure {
    flex: 1;
    display: grid;
    grid-template-columns: 32px 1fr 61px;
    grid-template-rows: 24px 1fr 14px;
    min-height: 0;
    background: #fff;
    font: 8px/14px "DejaVu Sans", sans-serif;
}
.plot-title {
    grid-area: 1 / 2;
    padding-top: 8px;
    text-align: center;
}
.logo {
    grid-area: 1 / 3;
    justify-self: end;
    margin: 5px 5px 0 0;
    border-radius: 5px;
    box-shadow: 0 0 2px #9ab;
}
.y-axis {
    grid-area: 2 / 1 / 4 / 2;
    display: grid;
    grid-template-rows: 7px repeat(10, 1fr);
    align-items: center;
    margin-bottom: -2px;
    padding-right: 3px;
    text-align: right;
}
.y-axis .unit {
    align-self: start;
    padding-left: 1px;
    line-height: 3px;
    text-align: left;
}
.plot-area {
    grid-area: 2 / 2;
    position: relative;
    min-height: 0;
}
.plot-area canvas {
    display: block;
    width: 100%;
    height: 100%;
}
.cursor {
    position: absolute;
    left: 27%;
    top: 62%;
    width: 8px;
    height: 12px;
}
.x-axis {
    grid-area: 3 / 2;
    display: grid;
    grid-template-columns: repeat(18, 1fr);
    margin-left: -18px;
    padding-top: 2px;
    text-align: center;
    white-space: nowrap;
}
.legend {
    grid-area: 2 / 3;
    display: grid;
    grid-template-columns: 10px 1fr;
    grid-template-rows: 22px 1fr;
    gap: 0 4px;
    padding: 0 0 4px 14px;
}
.exponent {
    grid-column: 2;
    margin-left: -4px;
    padding-top: 6px;
}
.exponent sup {
    font-size: 6px;
    line-height: 0;
}
.color-bar {
    border: 1px solid #333;
    background: linear-gradient(#f00, #ff0 33%, #80ff80 50%, #0ff 67%, #00f);
}
.color-labels {
    display: grid;
    grid-template-rows: repeat(9, 1fr);
    align-items: center;
    padding: 6px 0 18px 2px;
}

/* table panel */
.bottom {
    height: 125px;
}
.bottom-tabs {
    display: flex;
    gap: 5px;
    height: 19px;
    padding: 3px 2px 0;
    border-bottom: 1px solid #dce6ea;
}
.bottom-tabs button {
    padding: 0 3px;
    background: #f0f1f2;
    font-size: 9px;
}
.bottom-tabs i {
    margin-left: 2px;
    color: #bcc3c8;
    font: 11px/8px "DejaVu Sans", sans-serif;
}
.bottom-tabs .active {
    height: 16px;
    padding: 0 2px;
    border: 1px solid #c7dfea;
    border-bottom: 0;
    background: #fff;
    color: #3a5fa5;
}
.bottom-tabs .caret {
    margin: 5px 0 0 auto;
}
.bottom-tabs .pin {
    margin-top: 4px;
}
.bottom .toolbar {
    height: 20px;
    padding-left: 7px;
}

.status {
    height: 17px;
    padding-left: 432px;
    background: #f1efed;
    line-height: 20px;
    text-align: center;
}
```
FILE: field.js
```js
// Magnetic field of a round coil, seen in the r-z plane
const MU0 = 4e-7 * Math.PI;
const CURRENT = 0.9;
const LOOP = 0.0504;
const WIRE = 0.0055;
const BMAX = 48e-6;
const BACKGROUND = 1.2e-6;

// visible range of the axes, in metres
const R0 = 0.0098, R1 = 0.0975, Z1 = 0.0283, Z0 = -0.0203;

const canvas = document.getElementById("field");
canvas.width = canvas.clientWidth;
canvas.height = canvas.clientHeight;
const ctx = canvas.getContext("2d");
const W = canvas.width, H = canvas.height;
const sx = W / (R1 - R0), sy = H / (Z1 - Z0);

const toX = r => (r - R0) * sx;
const toY = z => (Z1 - z) * sy;

// field of a thin loop from the complete elliptic integrals K and E
function loopField(r, z) {
    const a = LOOP;
    const s = a * a + r * r + z * z;
    const al = s - 2 * a * r;
    const be = s + 2 * a * r;
    let x = 1, y = Math.sqrt(al / be), sum = (1 - al / be) / 2, p = 1;
    for (let i = 0; i < 6; i++) {
        const d = (x - y) / 2;
        const m = (x + y) / 2;
        y = Math.sqrt(x * y);
        x = m;
        sum += p * d * d;
        p *= 2;
    }
    const K = Math.PI / (2 * x);
    const E = K * (1 - sum);
    const c = MU0 * CURRENT / (2 * Math.PI * al * Math.sqrt(be));
    return [c * z / r * (s * E - al * K), c * ((a * a - r * r - z * z) * E + al * K)];
}

// inside the conductor the field falls linearly to zero
function B(r, z) {
    const dr = r - LOOP;
    const d = Math.hypot(dr, z) || 1e-9;
    if (d >= WIRE) return loopField(r, z);
    const f = loopField(LOOP + dr / d * WIRE, z / d * WIRE);
    return [f[0] * d / WIRE, f[1] * d / WIRE];
}

function drawSurface() {
    const img = ctx.createImageData(W, H);
    for (let j = 0; j < H; j++) {
        for (let i = 0; i < W; i++) {
            const f = B(R0 + (i + 0.5) / sx, Z1 - (j + 0.5) / sy);
            const t = Math.min(1, (Math.hypot(f[0], f[1]) + BACKGROUND) / BMAX) * 3;
            const k = (j * W + i) * 4;
            img.data[k] = 255 * Math.max(0, Math.min(1, t - 1));
            img.data[k + 1] = 255 * Math.max(0, Math.min(1, t, 3 - t));
            img.data[k + 2] = 255 * Math.max(0, Math.min(1, 2 - t));
            img.data[k + 3] = 255;
        }
    }
    ctx.putImageData(img, 0, 0);
}

// arrow centred on (r, z); without an angle it follows the field
function arrow(r, z, len, color, angle) {
    const f = B(r, z);
    const b = Math.hypot(f[0], f[1]);
    const l = len || Math.min(15, b * 1e6);
    ctx.save();
    ctx.translate(toX(r), toY(z));
    ctx.rotate(angle === undefined ? Math.atan2(-f[1], f[0]) : angle);
    ctx.globalAlpha = Math.min(1, Math.pow(b / 10.5e-6, 1.7));
    ctx.strokeStyle = ctx.fillStyle = color;
    ctx.lineWidth = Math.min(1.3, 0.4 + b * 4e4);
    ctx.beginPath();
    ctx.moveTo(-l / 2, 0);
    ctx.lineTo(l / 2, 0);
    ctx.stroke();
    const h = Math.min(5, l / 3);
    ctx.beginPath();
    ctx.moveTo(l / 2, 0);
    ctx.lineTo(l / 2 - h, h / 2.8);
    ctx.lineTo(l / 2 - h, -h / 2.8);
    ctx.fill();
    ctx.restore();
}

let seed = 7;
function rnd() {
    seed = (seed * 16807) % 2147483647;
    return seed / 2147483647;
}

// arrows along one closed contour: left and right crossing and half height, in mm
function contour(left, right, half, gap, color, len) {
    const c = (left + right) / 2000, a = (right - left) / 2000, h = half / 1000;
    let t = rnd();
    const end = t + 2 * Math.PI;
    while (t < end) {
        const r = c + a * Math.cos(t), z = h * Math.sin(t);
        const dx = a * Math.sin(t) * sx, dy = h * Math.cos(t) * sy;
        arrow(r, z, len, color, Math.atan2(dy, dx));
        t += gap * (0.5 + rnd()) / Math.hypot(dx, dy);
    }
}

drawSurface();

// single arrows on the far contours: r, z (mm) and length (px)
const far = [
    [11, 6, 13], [11, -8, 14], [11.3, -11, 9], [12.3, 18, 8], [12.5, 19.7, 9], [12.4, -19.3, 6],
    [18.5, 1, 12], [18.5, -2.8, 11], [19, -8.7, 11], [19.3, 10.3, 11], [19.7, 13, 11],
    [20, -14, 11], [20.6, -17, 18], [21.3, 19, 8], [23, 23.8, 6],
    [23.3, 0.7, 10], [23.3, -1.3, 10], [23.3, -3, 10], [24, -8.5, 11], [24.3, 9.3, 11],
    [24.6, -11.2, 11], [25, 11.5, 10], [25.3, -14, 10], [26, 15.4, 10], [27, -1.3, 13],
    [27.3, 3.7, 12], [27.5, 5.5, 13], [27.8, -8.3, 18], [27.5, -20.2, 9], [28, 20.3, 8],
    [29, 11.2, 11], [29.7, -14, 10], [29.2, -12.4, 10], [30, -2.5, 14], [30, -1, 14],
    [30.3, 3.6, 15], [30.5, 5.5, 14], [30.7, -6.3, 13], [31, 25.6, 5], [31.2, -8.8, 12],
    [31.5, -18, 10], [30.5, 15, 10], [32, 10, 12], [32.1, -11, 13], [32.5, 11.8, 12],
    [31.7, 17.6, 10], [33.2, 20.2, 8], [34.7, -16.3, 13], [34.3, 15.4, 9],
    [38.7, 21, 17], [41.5, 18.8, 8], [44.3, 21, 7], [41, -18.8, 8], [46, 26.5, 7], [49.5, 23.8, 9]
];
for (const [r, z, l] of far) arrow(r / 1000, z / 1000, l, "#b4142d");

// contours between the far field and the conductor
contour(32.5, 68, 19.6, 24, "#c01a1c");
contour(34.8, 65.4, 16.4, 17, "#c01a1c");
contour(36.6, 63.2, 14.2, 12, "#c01a18");
contour(38.1, 61.5, 12.2, 10, "#c41a14");
contour(39.4, 59.9, 10.7, 8, "#c81a10");
contour(40.7, 58.6, 9.5, 6, "#d01810");
contour(41.4, 57.8, 8.5, 5, "#d8140c");

// dense ring, thinning out towards the middle of the conductor
for (let k = 0; k <= 1; k += 0.07) {
    contour(42.2 + 4.2 * k, 57.1 - 2.5 * k, 7.7 - 3.6 * k, 6, "#ff0000", 13 - 2 * k);
}
contour(46.7, 54.3, 3.8, 9, "#f01008", 10);
contour(47.2, 53.8, 3.3, 12, "#d81c10", 10);
contour(48.7, 52.4, 1.9, 12, "#903c38", 9);

// air region outside the outer boundary
ctx.beginPath();
ctx.moveTo(W - 12, 0);
ctx.lineTo(W, 48);
ctx.lineTo(W, 0);
ctx.fillStyle = "#fff";
ctx.fill();
ctx.beginPath();
ctx.moveTo(W - 12, 0);
ctx.lineTo(W, 48);
ctx.strokeStyle = "#111";
ctx.stroke();

// frame and ticks
ctx.lineWidth = 1;
ctx.strokeStyle = "#223";
ctx.strokeRect(0.5, 0.5, W - 1, H - 1);
ctx.beginPath();
for (let r = 0.01; r < R1; r += 0.005) {
    ctx.moveTo(toX(r), 0);
    ctx.lineTo(toX(r), 4);
    ctx.moveTo(toX(r), H);
    ctx.lineTo(toX(r), H - 4);
}
for (let z = -0.02; z < Z1; z += 0.005) {
    ctx.moveTo(0, toY(z));
    ctx.lineTo(4, toY(z));
    ctx.moveTo(W, toY(z));
    ctx.lineTo(W - 4, toY(z));
}
ctx.globalAlpha = 0.5;
ctx.stroke();
```
